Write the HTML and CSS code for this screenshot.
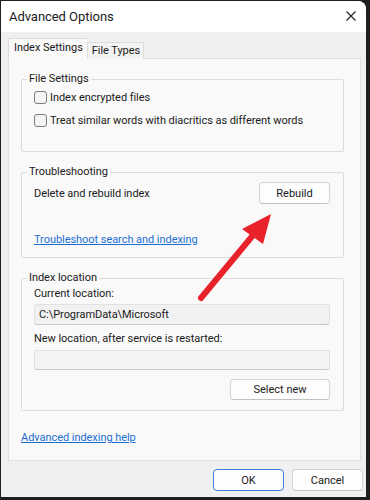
FILE: index.html
```html
<!DOCTYPE html>
<html lang="en">
<head>
    <meta charset="UTF-8">
    <title>Advanced Options</title>
    <link rel="stylesheet" href="styles.css">
</head>
<body>
    <div class="window">
        <div class="titlebar">
            <span class="title">Advanced Options</span>
            <svg class="close" viewBox="0 0 10 10">
                <path d="M0.5 0.5L9.5 9.5M9.5 0.5L0.5 9.5"/>
            </svg>
        </div>

        <div class="tabs">
            <div class="tab active">Index Settings</div>
            <div class="tab">File Types</div>
        </div>

        <div class="panel">
            <div class="group">
                <div class="group-title">File Settings</div>
                <label class="check"><span class="box"></span>Index encrypted files</label>
                <label class="check second"><span class="box"></span>Treat similar words with diacritics as different words</label>
            </div>

            <div class="group trouble">
                <div class="group-title">Troubleshooting</div>
                <div class="row">
                    <span>Delete and rebuild index</span>
                    <button class="btn rebuild">Rebuild</button>
                </div>
                <a class="link trouble-link" href="#">Troubleshoot search and indexing</a>
            </div>

            <div class="group location">
                <div class="group-title">Index location</div>
                <div class="text">Current location:</div>
                <div class="field current">C:\ProgramData\Microsoft</div>
                <div class="text new-label">New location, after service is restarted:</div>
                <div class="field empty"></div>
                <div class="actions">
                    <button class="btn select">Select new</button>
                </div>
            </div>

            <a class="link help" href="#">Advanced indexing help</a>
        </div>

        <div class="footer">
            <button class="btn primary">OK</button>
            <button class="btn">Cancel</button>
        </div>
    </div>

    <!-- red annotation arrow -->
    <svg class="arrow" viewBox="0 0 370 500">
        <line x1="201" y1="298" x2="254" y2="234"/>
        <polygon points="271,214 242,229 263,244"/>
    </svg>
</body>
</html>
```

FILE: styles.css
```css
* {
    margin: 0;
    padding: 0;
    box-sizing: border-box;
}

body {
    font-family: Roboto, "Liberation Sans", sans-serif;
    font-size: 11px;
    letter-spacing: -0.05px;
    color: #1b1b1b;
    background: #1f1f1f;
    width: 370px;
    height: 500px;
    position: relative;
    overflow: hidden;
}

.window {
    margin: 1px 0 0 1px;
    width: 365px;
    height: 496px;
    background: #f0f0f0;
    border-radius: 0 8px 0 0;
    overflow: hidden;
}

.titlebar {
    height: 31px;
    background: #ffffff;
    display: flex;
    align-items: center;
    justify-content: space-between;
    padding: 0 10px 1px 8px;
}

.title {
    font-size: 13px;
    color: #1a1a1a;
}

.close {
    width: 10px;
    height: 10px;
    stroke: #222;
    stroke-width: 1.1;
    fill: none;
}

.tabs {
    display: flex;
    align-items: flex-end;
    margin: 6px 0 0 7px;
    height: 21px;
    position: relative;
    z-index: 1;
    margin-bottom: -1px;
}

.tab {
    height: 17px;
    line-height: 15px;
    padding: 0 3px 0 4px;
    border: 1px solid #dcdcdc;
    border-bottom: none;
    background: #f3f3f3;
}

.tab.active {
    height: 21px;
    line-height: 18px;
    padding: 0 4px 0 5px;
    background: #f9f9f9;
    border-right: none;
}

.panel {
    margin: 0 5px 0 7px;
    height: 403px;
    background: #f9f9f9;
    border: 1px solid #e0e0e0;
    padding: 0 16px 0 12px;
}

.group {
    margin-top: 20px;
    border: 1px solid #dcdcdc;
    border-radius: 2px;
    padding: 0 13px 21px 12px;
}

.group-title {
    width: fit-content;
    margin: -9px 0 0 -7px;
    padding: 0 2px 0 2px;
    line-height: 16px;
    background: #f9f9f9;
}

.check {
    display: flex;
    align-items: center;
    height: 20px;
    gap: 3px;
}

.check.second {
    margin-top: 3px;
}

.box {
    width: 13px;
    height: 13px;
    border: 1px solid #7c7c7c;
    border-radius: 3px;
    background: #f5f5f5;
}

.trouble {
    padding-bottom: 9px;
}

.row {
    display: flex;
    align-items: center;
    justify-content: space-between;
    margin-top: 2px;
}

.btn {
    font-family: inherit;
    font-size: 11px;
    color: #1b1b1b;
    background: #fdfdfd;
    border: 1px solid #d4d4d4;
    border-bottom-color: #c2c2c2;
    border-radius: 4px;
    height: 22px;
    width: 71px;
}

.link {
    display: block;
    width: fit-content;
    line-height: 16px;
    color: #1c6fd0;
    text-decoration: underline;
}

.trouble-link {
    margin-top: 28px;
}

.location {
    padding-bottom: 10px;
}

.text {
    line-height: 16px;
    margin-top: 0;
}

.field {
    height: 21px;
    margin-top: 2px;
    padding-left: 4px;
    line-height: 19px;
    background: #f1f1f1;
    border: 1px solid #e1e1e1;
    border-bottom-color: #c9c9c9;
    border-radius: 3px;
}

.new-label {
    margin-top: 6px;
}

.field.empty {
    height: 20px;
    margin-top: 3px;
    background: #f4f4f4;
}

.actions {
    display: flex;
    justify-content: flex-end;
    margin-top: 9px;
}

.btn.select {
    width: 100px;
    height: 21px;
}

.help {
    margin-top: 19px;
}

.footer {
    display: flex;
    justify-content: flex-end;
    gap: 8px;
    padding: 8px 3px 0 0;
}

.btn.primary {
    border: 1px solid #3a80d2;
}

.arrow {
    position: absolute;
    left: 0;
    top: 0;
    width: 370px;
    height: 500px;
    pointer-events: none;
}

.arrow line {
    stroke: #e8212a;
    stroke-width: 6;
    stroke-linecap: round;
}

.arrow polygon {
    fill: #e8212a;
}
```
